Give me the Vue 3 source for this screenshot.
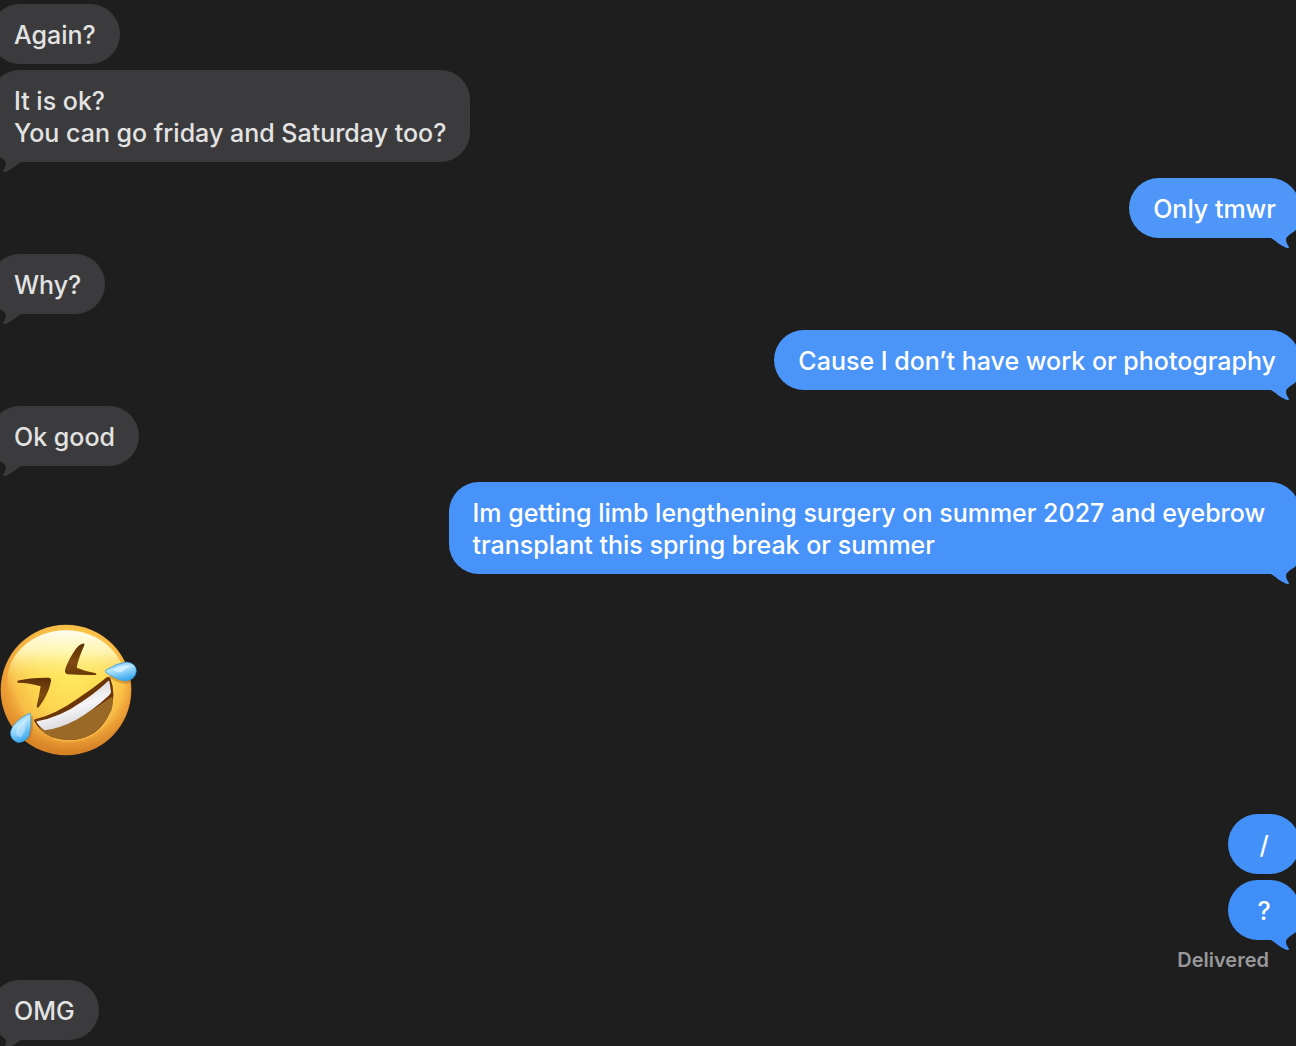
<script setup>
const messages = [
  { from: 'them', text: 'Again?' },
  { from: 'them', text: 'It is ok?\nYou can go friday and Saturday too?', tail: true },
  { from: 'me', text: 'Only tmwr', tail: true, shade: '#4e97f9' },
  { from: 'them', text: 'Why?', tail: true },
  { from: 'me', text: 'Cause I don’t have work or photography', tail: true, shade: '#4b95f9' },
  { from: 'them', text: 'Ok good', tail: true },
  {
    from: 'me',
    text: 'Im getting limb lengthening surgery on summer 2027 and eyebrow transplant this spring break or summer',
    tail: true,
    shade: '#4893f9',
  },
  { from: 'them', emoji: true },
  { from: 'me', text: '/', shade: '#4290f8' },
  { from: 'me', text: '?', tail: true, status: 'Delivered', shade: '#408ff8' },
  { from: 'them', text: 'OMG', tail: true },
]

const follows = (i) => i > 0 && messages[i - 1].from === messages[i].from
</script>

<template>
  <main class="chat">
    <ol class="thread">
      <li
        v-for="(m, i) in messages"
        :key="i"
        class="message"
        :class="[m.from, { follows: follows(i), sticker: m.emoji }]"
      >
        <svg v-if="m.emoji" class="emoji" viewBox="0 27 414 396" role="img" aria-label="Rolling on the floor laughing">
          <defs>
            <linearGradient id="rim" x1="0" y1="0" x2="0" y2="1">
              <stop offset="0" stop-color="#eeb045" />
              <stop offset="0.4" stop-color="#ee9a33" />
              <stop offset="1" stop-color="#d58227" />
            </linearGradient>
            <radialGradient id="glow" cx="0.53" cy="0.42" r="0.56">
              <stop offset="0" stop-color="#ffe55b" />
              <stop offset="0.45" stop-color="#fdd750" />
              <stop offset="0.75" stop-color="#f8bd45" />
              <stop offset="1" stop-color="#ee9c35" stop-opacity="0" />
            </radialGradient>
            <linearGradient id="shine" x1="0" y1="0" x2="0" y2="1">
              <stop offset="0" stop-color="#fffef0" />
              <stop offset="0.22" stop-color="#fffbc0" stop-opacity="0.85" />
              <stop offset="0.45" stop-color="#fff070" stop-opacity="0.3" />
              <stop offset="0.65" stop-color="#ffe455" stop-opacity="0" />
            </linearGradient>
            <linearGradient id="eye" x1="0" y1="0" x2="0" y2="1">
              <stop offset="0" stop-color="#5c2f05" />
              <stop offset="0.6" stop-color="#804a10" />
              <stop offset="1" stop-color="#6b3909" />
            </linearGradient>
            <linearGradient id="teeth" x1="0.3" y1="0.2" x2="0.6" y2="0.9">
              <stop offset="0" stop-color="#d6d5d8" />
              <stop offset="0.5" stop-color="#f6f5f7" />
              <stop offset="1" stop-color="#d5d4d8" />
            </linearGradient>
            <linearGradient id="drop" x1="0" y1="0" x2="0.4" y2="1">
              <stop offset="0" stop-color="#5bb4ea" />
              <stop offset="0.45" stop-color="#b5e5ff" />
              <stop offset="1" stop-color="#41abef" />
            </linearGradient>
          </defs>
          <circle cx="198" cy="225" r="196" fill="url(#rim)" />
          <circle cx="198" cy="225" r="194" fill="url(#glow)" />
          <ellipse cx="198" cy="198" rx="176" ry="152" fill="url(#shine)" />
          <path d="M253 86Q238 83 218 116Q199 147 195 166Q194 177 204 178Q247 181 287 180Q292 177 285 174Q253 168 230 158Q235 131 253 91Z" fill="url(#eye)" />
          <path d="M52 197Q93 187 147 188Q155 190 153 199Q146 238 116 277Q110 281 110 274Q117 245 122 214Q91 204 53 203Z" fill="url(#eye)" />
          <path d="M102 317Q101 313 108 312Q167 297 228 254Q286 216 320 187Q328 184 331 190Q350 238 330 291Q306 351 250 369Q206 382 158 367Q119 350 102 317Z" fill="#6c3506" />
          <path d="M116 338Q213 335 334 246Q343 250 335 284Q306 350 248 370Q202 381 158 367Q131 355 116 338Z" fill="#9a6928" />
          <path d="M111 319Q181 307 248 259Q300 223 324 198Q328 196 329 203L333 231Q331 239 325 243Q280 285 229 314Q180 340 134 346Q121 338 111 324Q109 320 111 319Z" fill="url(#teeth)" />
          <path d="M160 371Q206 386 252 371Q310 352 333 292" fill="none" stroke="#ffc452" stroke-width="3" opacity="0.8" />
          <path d="M328 183Q364 208 390 199" fill="none" stroke="#b86a1d" stroke-width="9" opacity="0.45" />
          <path d="M95 304Q99 345 82 377" fill="none" stroke="#b86a1d" stroke-width="9" opacity="0.45" />
          <path d="M316 169Q316 165 322 163Q351 144 380 141Q409 145 409 169Q405 196 376 198Q355 196 319 174Z" fill="url(#drop)" stroke="#2796dc" stroke-width="2" />
          <path d="M338 164Q371 145 392 155Q374 161 366 171Q353 174 338 164Z" fill="#e8f8ff" opacity="0.6" />
          <path d="M87 295Q92 293 92 301Q95 334 87 362Q74 384 52 382Q29 373 32 349Q39 320 87 295Z" fill="url(#drop)" stroke="#2796dc" stroke-width="2" />
          <path d="M77 313Q78 350 64 366Q51 366 46 355Q49 330 77 313Z" fill="#e8f8ff" opacity="0.4" />
        </svg>
        <p v-else class="bubble" :style="m.shade ? { '--fill': m.shade } : null">
          {{ m.text }}
          <svg v-if="m.tail" class="tail" viewBox="0 0 30 30" aria-hidden="true">
            <path d="M0 0H26V12C21 16 16 18 16 22C16 25 18 27 19 29C19 30 18 30 17 30C11 28 6 23 1 20L0 20Z" />
          </svg>
        </p>
        <small v-if="m.status" class="status">{{ m.status }}</small>
      </li>
    </ol>
  </main>
</template>

<style>
body {
  margin: 0;
  background: #1e1e1e;
}
</style>

<style scoped>
.chat {
  box-sizing: border-box;
  min-height: 100vh;
  padding-top: 4px;
  overflow: hidden;
  background: #1e1e1e;
  font-family: Inter, "Liberation Sans", sans-serif;
}

.thread {
  display: flex;
  flex-direction: column;
  gap: 16px;
  margin: 0 -4px 0 -10px;
  padding: 0;
  list-style: none;
}

.message {
  display: flex;
  flex-direction: column;
  align-items: flex-start;
}

.message.me {
  align-items: flex-end;
}

.message.follows {
  margin-top: -10px;
}

.message.sticker {
  padding: 34px 10px 42px;
}

.emoji {
  display: block;
  width: 138px;
  height: 132px;
}

.bubble {
  --fill: #3b3b3d;
  position: relative;
  display: grid;
  justify-content: center;
  box-sizing: border-box;
  min-width: 72px;
  max-width: 65%;
  margin: 0;
  padding: 15px 24px 13px;
  border-radius: 30px;
  background: var(--fill);
  color: #e3e3e3;
  font-size: 25px;
  font-weight: 500;
  line-height: 32px;
  white-space: pre-line;
}

.me .bubble {
  color: #ffffff;
}

.tail {
  position: absolute;
  right: 0;
  bottom: -10px;
  width: 30px;
  height: 30px;
  fill: var(--fill);
}

.them .tail {
  right: auto;
  left: 2px;
  transform: scaleX(-1);
}

.status {
  margin: 8px 31px -8px 0;
  color: #98989a;
  font-size: 20px;
  font-weight: 600;
  line-height: 24px;
}
</style>
